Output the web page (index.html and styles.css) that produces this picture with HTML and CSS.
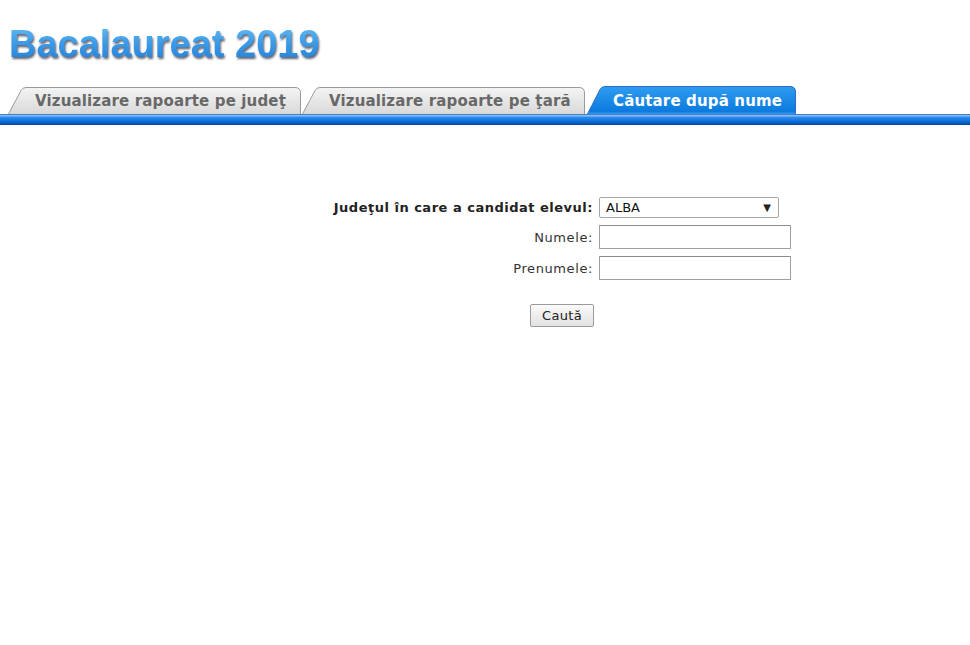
FILE: index.html
```html
<!DOCTYPE html>
<html lang="ro">
<head>
<meta charset="utf-8">
<title>Bacalaureat 2019</title>
<link rel="stylesheet" href="styles.css">
</head>
<body>
<header class="header">
  <h1 class="title">Bacalaureat 2019</h1>
</header>
<nav class="tabs">
  <a class="tab tab-1">
    <svg class="tab-bg" width="293" height="27" viewBox="0 0 293 27" aria-hidden="true">
      <defs>
        <linearGradient id="g1" x1="0" y1="0" x2="0" y2="1">
          <stop offset="0" stop-color="#f4f4f4"/>
          <stop offset="1" stop-color="#d9d9d9"/>
        </linearGradient>
      </defs>
      <path d="M0.5,27 L13,3.5 Q14.5,0.5 18,0.5 L287,0.5 Q292.5,0.5 292.5,6 L292.5,27" fill="url(#g1)" stroke="#9a9a9a"/>
    </svg>
    <span class="tab-label">Vizualizare rapoarte pe judeţ</span>
  </a>
  <a class="tab tab-2">
    <svg class="tab-bg" width="283" height="27" viewBox="0 0 283 27" aria-hidden="true">
      <defs>
        <linearGradient id="g2" x1="0" y1="0" x2="0" y2="1">
          <stop offset="0" stop-color="#f4f4f4"/>
          <stop offset="1" stop-color="#d9d9d9"/>
        </linearGradient>
      </defs>
      <path d="M0.5,27 L13,3.5 Q14.5,0.5 18,0.5 L277,0.5 Q282.5,0.5 282.5,6 L282.5,27" fill="url(#g2)" stroke="#9a9a9a"/>
    </svg>
    <span class="tab-label">Vizualizare rapoarte pe ţară</span>
  </a>
  <a class="tab tab-3 active">
    <svg class="tab-bg" width="210" height="28" viewBox="0 0 210 28" aria-hidden="true">
      <defs>
        <linearGradient id="g3" x1="0" y1="0" x2="0" y2="1">
          <stop offset="0" stop-color="#2f9cf2"/>
          <stop offset="1" stop-color="#0877dc"/>
        </linearGradient>
      </defs>
      <path d="M0.5,28 L13,3.5 Q14.5,0.5 18,0.5 L203,0.5 Q208.5,0.5 208.5,6 L208.5,28 Z" fill="url(#g3)" stroke="#2a6fc4"/>
      <path d="M1,27.5 L208,27.5" stroke="#2f96ec" stroke-width="2"/>
    </svg>
    <span class="tab-label">Căutare după nume</span>
  </a>
</nav>
<div class="tab-bar"></div>

<main class="content">
  <form class="search-form">
    <div class="fields">
      <label class="field-label bold">Judeţul în care a candidat elevul:</label>
      <div class="select">
        <span class="select-value">ALBA</span>
        <span class="select-arrow">▼</span>
      </div>
      <label class="field-label">Numele:</label>
      <input class="text-input" type="text">
      <label class="field-label">Prenumele:</label>
      <input class="text-input" type="text">
    </div>
    <div class="actions">
      <button class="btn" type="button">Caută</button>
    </div>
  </form>
</main>
</body>
</html>
```

FILE: styles.css
```css
html, body {
  margin: 0;
  padding: 0;
  background: #ffffff;
}

body {
  font-family: "DejaVu Sans", Verdana, sans-serif;
  color: #222;
}

.header {
  padding: 22px 0 0 9px;
  height: 67px;
  box-sizing: border-box;
}

.title {
  margin: 0;
  font-family: "Liberation Sans", Arial, sans-serif;
  font-weight: bold;
  font-size: 38px;
  line-height: 44px;
  display: inline-block;
  background: linear-gradient(to bottom, #6cc1f6 0%, #3c9de9 45%, #1f7bd4 100%);
  -webkit-background-clip: text;
  background-clip: text;
  color: transparent;
  filter: drop-shadow(1px 2px 1px rgba(30, 30, 50, 0.7));
}

.tabs {
  display: flex;
  align-items: flex-end;
  padding-left: 8px;
  margin-top: 20px;
  height: 27px;
}

.tab {
  position: relative;
  display: flex;
  align-items: center;
  height: 27px;
  text-decoration: none;
  cursor: pointer;
}

.tab-bg {
  position: absolute;
  left: 0;
  top: 0;
  display: block;
}

.tab-label {
  position: relative;
  font-weight: bold;
  font-size: 15px;
  letter-spacing: 0.15px;
  color: #686868;
  white-space: nowrap;
}

.tab-1 { width: 293px; }
.tab-1 .tab-label { padding-left: 27px; }

.tab-2 { width: 283px; margin-left: 1px; }
.tab-2 .tab-label { padding-left: 27px; }

.tab-3 { width: 210px; height: 28px; margin-left: 2px; }
.tab-3 .tab-label { padding-left: 26px; color: #ffffff; padding-top: 1px; }

.tab-bar {
  height: 11px;
  box-sizing: border-box;
  border-top: 1px solid #3f7fd0;
  background: linear-gradient(to bottom, #8fb9ec 0px, #8fb9ec 1px, #2f8ff0 2px, #1577e0 5px, #0a66cc 7px, #0a4fb0 9px, #0e3f98 10px);
}

.content {
  padding-top: 72px;
}

.search-form {
  margin-left: 333px;
  width: 458px;
}

.fields {
  display: grid;
  grid-template-columns: 266px 192px;
  row-gap: 7px;
  align-items: center;
}

.field-label {
  justify-self: end;
  padding-right: 6px;
  font-size: 13px;
  letter-spacing: 0.6px;
  color: #333333;
  white-space: nowrap;
}

.field-label.bold {
  font-weight: bold;
  letter-spacing: 0.5px;
  color: #222222;
}

.select {
  width: 180px;
  height: 21px;
  box-sizing: border-box;
  border: 1px solid #a6a6a6;
  border-radius: 2px;
  display: flex;
  align-items: center;
  justify-content: space-between;
  padding: 0 7px 0 6px;
  font-size: 13px;
  color: #111;
  background: #ffffff;
}

.select-arrow {
  font-size: 10px;
  color: #222;
  font-family: "DejaVu Sans", sans-serif;
}

.text-input {
  width: 192px;
  height: 24px;
  box-sizing: border-box;
  margin: 0;
  border: 1px solid #a0a0a0;
  border-top-color: #8c8c8c;
  padding: 2px 4px;
  font-family: "DejaVu Sans", Verdana, sans-serif;
  font-size: 13px;
  background: #ffffff;
}

.actions {
  display: flex;
  justify-content: center;
  margin-top: 24px;
}

.btn {
  width: 64px;
  height: 23px;
  box-sizing: border-box;
  border: 1px solid #9b9b9b;
  border-radius: 2px;
  background: linear-gradient(to bottom, #fafafa, #e2e2e2);
  font-family: "DejaVu Sans", Verdana, sans-serif;
  font-size: 13px;
  letter-spacing: 0.3px;
  color: #222;
  padding: 0;
}
```
